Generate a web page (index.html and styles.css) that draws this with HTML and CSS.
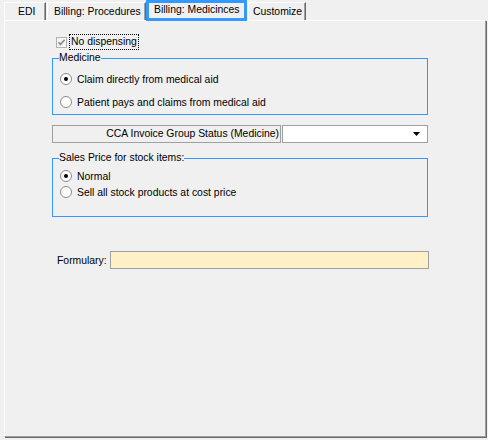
FILE: index.html
```html
<!DOCTYPE html>
<html>
<head>
<meta charset="utf-8">
<link rel="stylesheet" href="styles.css">
</head>
<body>
<div class="tabs">
  <div class="tab tab-edi">EDI</div>
  <div class="tab tab-proc">Billing: Procedures</div>
  <div class="tab tab-active">Billing: Medicinces</div>
  <div class="tab tab-cust">Customize</div>
</div>
<div class="panel">
  <div class="content">
    <div class="check-row">
      <svg class="checkbox" width="11" height="11" viewBox="0 0 11 11">
        <rect x="0.5" y="0.5" width="10" height="10" fill="#f4f4f4" stroke="#b1b1b1"/>
        <path d="M2.5 5.2 L4.5 7.4 L8.6 2.8" fill="none" stroke="#8d8d8d" stroke-width="1.7"/>
      </svg>
      <span class="focus">No dispensing</span>
    </div>

    <fieldset class="group g1">
      <legend>Medicine</legend>
      <div class="radio-row">
        <svg class="radio" width="12" height="12" viewBox="0 0 12 12">
          <circle cx="6" cy="6" r="5.5" fill="#fff" stroke="#8a8a8a"/>
          <circle cx="6" cy="6" r="2" fill="#000"/>
        </svg>
        <span>Claim directly from medical aid</span>
      </div>
      <div class="radio-row second">
        <svg class="radio" width="12" height="12" viewBox="0 0 12 12">
          <circle cx="6" cy="6" r="5.5" fill="#fff" stroke="#8a8a8a"/>
        </svg>
        <span>Patient pays and claims from medical aid</span>
      </div>
    </fieldset>

    <div class="cca-row">
      <div class="cca-label">CCA Invoice Group Status (Medicine)</div>
      <div class="combo">
        <svg width="7" height="4" viewBox="0 0 7 4"><path d="M0 0 H7 L3.5 4 Z" fill="#000"/></svg>
      </div>
    </div>

    <fieldset class="group g2">
      <legend>Sales Price for stock items:</legend>
      <div class="radio-row">
        <svg class="radio" width="12" height="12" viewBox="0 0 12 12">
          <circle cx="6" cy="6" r="5.5" fill="#fff" stroke="#8a8a8a"/>
          <circle cx="6" cy="6" r="2" fill="#000"/>
        </svg>
        <span>Normal</span>
      </div>
      <div class="radio-row">
        <svg class="radio" width="12" height="12" viewBox="0 0 12 12">
          <circle cx="6" cy="6" r="5.5" fill="#fff" stroke="#8a8a8a"/>
        </svg>
        <span>Sell all stock products at cost price</span>
      </div>
    </fieldset>

    <div class="form-row">
      <span class="form-label">Formulary:</span>
      <div class="form-input"></div>
    </div>
  </div>
</div>
</body>
</html>
```

FILE: styles.css
```css
html, body {
  margin: 0;
  padding: 0;
}
body {
  width: 488px;
  height: 440px;
  background: #f0f0f0;
  font-family: "Liberation Sans", Arial, sans-serif;
  font-size: 10.4px;
  color: #000;
  overflow: hidden;
}
.tabs {
  display: flex;
  align-items: flex-end;
  height: 20px;
  padding-left: 4px;
}
.tab {
  box-sizing: border-box;
  height: 18px;
  line-height: 17px;
  border-top: 1px solid #fff;
  border-left: 1px solid #fff;
  border-right: 1px solid #696969;
  box-shadow: inset -1px 0 0 #a0a0a0;
  white-space: nowrap;
}
.tab-edi {
  width: 42px;
  padding-left: 13px;
  margin-right: 1px;
}
.tab-proc {
  width: 99px;
  padding-left: 6px;
}
.tab-active {
  position: relative;
  z-index: 2;
  width: 101px;
  height: 21px;
  margin-bottom: -1px;
  border: 3px solid #3399ff;
  box-shadow: none;
  background: #f0f0f0;
  line-height: 14px;
  padding-left: 5px;
  margin-right: 1px;
}
.tab-cust {
  width: 58px;
  padding-left: 4px;
}
.panel {
  box-sizing: border-box;
  width: 482px;
  height: 417px;
  margin-left: 4px;
  border-top: 1px solid #fff;
  border-left: 1px solid #fff;
  border-right: 1px solid #a0a0a0;
  border-bottom: 1px solid #a0a0a0;
  box-shadow: 1px 1px 0 #696969;
}
.content {
  padding-left: 47px;
  width: 376px;
}
.check-row {
  display: flex;
  align-items: center;
  height: 16px;
  margin-top: 13px;
  margin-left: 4px;
}
.checkbox {
  display: block;
  margin-right: 2px;
}
.focus {
  border: 1px dotted #000;
  padding: 0 1px;
  line-height: 14px;
}
.group {
  box-sizing: border-box;
  width: 376px;
  margin: 0;
  border: 1px solid #3399ff;
  min-width: 0;
}
.group legend {
  padding: 0;
  margin-left: -1px;
  line-height: 12px;
}
.g1 {
  margin-top: 2px;
  padding: 7px 0 4px 7px;
}
.g2 {
  margin-top: 9px;
  padding: 4px 0 16px 7px;
}
.radio-row {
  display: flex;
  align-items: center;
  gap: 5px;
  height: 16px;
  white-space: nowrap;
}
.radio-row.second {
  margin-top: 7px;
}
.radio {
  display: block;
  flex: none;
}
.cca-row {
  display: flex;
  gap: 1px;
  height: 18px;
  margin-top: 10px;
}
.cca-label {
  box-sizing: border-box;
  width: 229px;
  border: 1px solid #a0a0a0;
  text-align: right;
  line-height: 16px;
  padding-right: 1px;
  white-space: nowrap;
}
.combo {
  box-sizing: border-box;
  width: 146px;
  border: 1px solid #a0a0a0;
  background: #fff;
  display: flex;
  align-items: center;
  justify-content: flex-end;
  padding-right: 7px;
}
.combo svg {
  display: block;
}
.form-row {
  display: flex;
  align-items: center;
  height: 18px;
  margin-top: 34px;
}
.form-label {
  width: 53px;
  margin-left: 5px;
  flex: none;
}
.form-input {
  box-sizing: border-box;
  width: 319px;
  height: 18px;
  border: 1px solid #a0a0a0;
  background: #fff0c8;
  flex: none;
}
```
